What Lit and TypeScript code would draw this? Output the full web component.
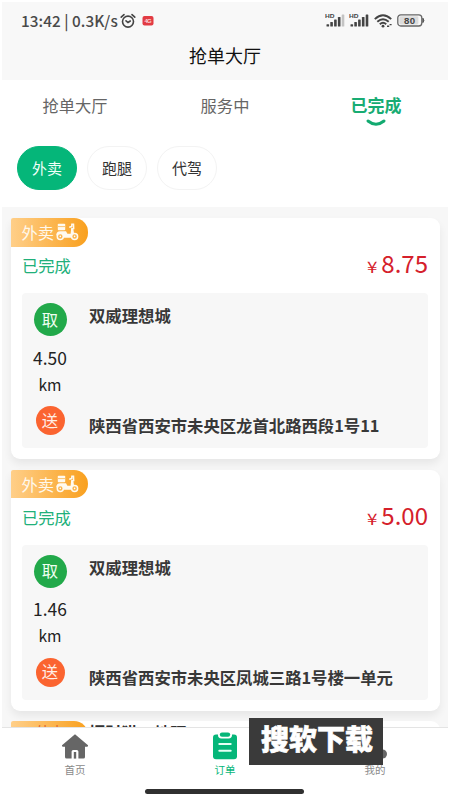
import { LitElement, html, css, svg } from "lit";
import { customElement, property } from "lit/decorators.js";

const FONT = css`"Noto Sans CJK SC", "Noto Sans", sans-serif`;

@customElement("status-bar")
class StatusBar extends LitElement {
  static styles = css`
    :host { display: flex; align-items: center; height: 37px; padding: 0 23px 0 19px; color: #4a4a4a; }
    .time { font: 500 15.3px/20px ${FONT}; letter-spacing: 0.05px; white-space: pre; margin-top: -2px; }
    .alarm { margin-left: 2px; }
    .mark { margin-left: 6px; }
    .spacer { flex: 1; }
    svg { display: block; flex: none; }
    .sig { margin-right: 4px; }
    .wifi { margin: 0 5px 0 1px; }
    text { font-family: "Liberation Sans", sans-serif; }
  `;
  signal(weak: boolean) {
    return html`<svg class="sig" width="20" height="15" viewBox="0 0 20 15">
      <text x="0" y="5" font-size="6" font-weight="700" fill="#444" textLength="9.5" lengthAdjust="spacingAndGlyphs">HD</text>
      ${[0, 1, 2, 3, 4].map((i) => svg`<rect x=${1.5 + i * 3.8} y=${[11.2, 9, 6.5, 4, 1.5][i]} width="2.6"
        height=${[2.3, 4.5, 7, 9.5, 12][i]} rx=".6" fill=${weak && i === 4 ? "#c4c4c4" : "#444"} />`)}
    </svg>`;
  }
  render() {
    return html`
      <span class="time">13:42 | 0.3K/s</span>
      <svg class="alarm" width="16" height="16" viewBox="0 0 16 16" fill="none" stroke="#444" stroke-width="1.6" stroke-linecap="round">
        <circle cx="8" cy="8.6" r="5.5" /><path d="M1.2 4.2 4 1.6M14.8 4.2 12 1.6M6 7.8l2 1.7 2.3-1.5" />
      </svg>
      <svg class="mark" width="12" height="10" viewBox="0 0 12 10">
        <rect x=".5" width="11" height="9.5" rx="2" fill="#e23b43" />
        <text x="2.4" y="7" font-size="6" font-weight="700" fill="#fbd5d5" textLength="7.2">4G</text>
      </svg>
      <span class="spacer"></span>
      ${this.signal(true)}${this.signal(false)}
      <svg class="wifi" width="18" height="14" viewBox="0 0 18 14" fill="none" stroke="#444" stroke-width="1.9">
        <path d="M.8 5.1Q9-2.5 17.2 5.1M3.3 7.8Q9 2.6 14.7 7.8M5.8 10.3Q9 7.4 12.2 10.3" />
        <circle cx="9" cy="12.2" r="1.4" fill="#444" stroke="none" />
        <path d="M13 12.2h2.2m.4-1.6h2" stroke-width="1.4" />
      </svg>
      <svg width="28" height="13" viewBox="0 0 28 13">
        <rect x=".8" y=".8" width="24" height="11.2" rx="3" fill="none" stroke="#666" stroke-width="1.3" />
        <rect x="2.4" y="2.3" width="19" height="8.2" rx="1.4" fill="#dcdcdc" />
        <path d="M25.9 4.2q2 2.2 0 4.4z" fill="#555" stroke="#555" />
        <text x="7" y="9.8" font-size="9.6" fill="#444" textLength="11.2" font-weight="700">80</text>
      </svg>`;
  }
}

@customElement("order-card")
class OrderCard extends LitElement {
  @property() price = "";
  @property() distance = "";
  @property() from = "";
  @property() to = "";
  static styles = css`
    :host { display: block; box-sizing: border-box; height: 241px; flex: none; background: #fff;
      border-radius: 2px 9px 9px 9px; box-shadow: 0 5px 9px rgba(0, 0, 0, 0.065); font-family: ${FONT}; }
    .tag { display: flex; align-items: center; width: 77px; height: 28.5px; box-sizing: border-box; padding-left: 10.5px;
      border-radius: 2px 14px 14px 0; background: linear-gradient(90deg, #ffcf89, #f9a01e);
      color: #fff8ec; font-size: 16.3px; line-height: 28px; }
    .tag svg { margin: 0 0 0 1px; }
    .summary { display: flex; justify-content: space-between; align-items: center; height: 46.5px;
      box-sizing: border-box; padding: 0 12px 9.5px 11px; }
    .state { color: #21b07a; font-size: 16.3px; line-height: 24px; }
    .price { color: #d5202b; font-size: 24px; line-height: 36px; white-space: nowrap; display: flex; align-items: baseline; }
    .yen { font-size: 15px; margin-right: 4px; transform: scaleX(1.25); transform-origin: right; }
    .route { display: grid; grid-template-columns: 56px 1fr; margin: 0 12px 0 11px; height: 155px;
      background: #f7f7f7; border-radius: 4px; box-sizing: border-box; }
    .stops { display: flex; flex-direction: column; align-items: center; padding-top: 10px; }
    .dot { display: flex; align-items: center; justify-content: center; border-radius: 50%; color: #f0fff2;
      width: 33px; height: 33px; font-size: 16.3px; line-height: 1; background: #22a94a; padding-bottom: 1px; box-sizing: border-box; }
    .dot.to { width: 29px; height: 29px; background: #fb6430; color: #fff0e8; margin-top: 9.5px; }
    .num { color: #222; font-size: 17.4px; line-height: 26px; margin-top: 8.5px; }
    .unit { color: #222; font-size: 15.6px; line-height: 26px; }
    .places { display: flex; flex-direction: column; padding: 10px 0 11px 11px; justify-content: space-between;
      color: #383838; font-size: 16.35px; line-height: 24px; font-weight: 700; white-space: nowrap; }
  `;
  render() {
    return html`
      <div class="tag">外卖
        <svg width="24" height="18" viewBox="0 0 24 18" fill="none" stroke="#fffaf0" stroke-width="1.5">
          <rect x="2.8" y=".8" width="7.4" height="6.4" rx=".8" fill="#fffaf0" stroke="none" />
          <path d="M3 3.6h7" stroke="#fbb54d" stroke-width=".8" />
          <path d="M1.2 12.2Q1.5 8.4 5 8.2h6l1.4 2.6h3.2L16.2 5h2l.8 5.2q3.2.4 4 3l-3-.4-2.4 2H9z" fill="#fffaf0" stroke="none" />
          <path d="M14.2 4.2l2.5-.6.2-2.4h1.6l.2 5" />
          <circle cx="5.3" cy="13.4" r="3" fill="#fbb54d" /><circle cx="19.6" cy="13.4" r="3" fill="#fbb54d" />
          <circle cx="5.3" cy="13.4" r=".8" fill="#fff" stroke="none" /><circle cx="19.6" cy="13.4" r=".8" fill="#fff" stroke="none" />
        </svg>
      </div>
      <div class="summary"><span class="state">已完成</span><span class="price"><span class="yen">¥</span>${this.price}</span></div>
      <div class="route">
        <div class="stops">
          <span class="dot">取</span><span class="num">${this.distance}</span><span class="unit">km</span><span class="dot to">送</span>
        </div>
        <div class="places"><span>${this.from}</span><span>${this.to}</span></div>
      </div>`;
  }
}

@customElement("app-root")
class AppRoot extends LitElement {
  static styles = css`
    :host { display: block; position: relative; width: 450px; height: 800px; box-sizing: border-box; padding: 2px 2px 0;
      overflow: hidden; background: #fff; font-family: ${FONT}; }
    .page { display: flex; flex-direction: column; height: 798px; }
    header { height: 78px; flex: none; background: #f8f8f8; }
    h1 { margin: 0; text-align: center; font-size: 18px; line-height: 33px; font-weight: 400; color: #111; }
    .tabs { display: grid; grid-template-columns: 146px 154px 146px; height: 66px; flex: none; text-align: center;
      font-size: 16.3px; line-height: 24px; color: #666; padding-top: 12.5px; box-sizing: border-box; }
    .tab { display: flex; flex-direction: column; align-items: center; }
    .tab.on { color: #18ac73; font-weight: 700; font-size: 17px; padding-left: 2px; }
    .tab svg { margin-top: 2px; }
    .pills { display: flex; gap: 10px; height: 61px; flex: none; padding-left: 15px; }
    .pill { display: flex; align-items: center; justify-content: center; width: 60px; height: 44px; border-radius: 22px;
      box-sizing: border-box; border: 1.5px solid #f3f3f3; font-size: 15px; line-height: 22px; color: #333; }
    .pill.on { background: #05b679; border-color: #05b679; color: #f0fff8; }
    .list { display: flex; flex-direction: column; gap: 10.5px; height: 520px; flex: none; box-sizing: border-box;
      padding: 11px 8px 0 9px; overflow: hidden; background: #f7f7f7; }
    .peek { position: relative; flex: none; height: 60px; }
    .card { height: 60px; background: #fff; border-radius: 2px 9px 0 0; }
    .ribbon { width: 77px; height: 28px; border-radius: 2px 14px 14px 0; background: linear-gradient(90deg, #ffcf89, #f9a01e); }
    .under { position: absolute; top: 1px; left: 25px; display: flex; gap: 25px; font-size: 14px; line-height: 18px; color: #e0642c; }
    .under .place { font-size: 16.3px; line-height: 21px; font-weight: 700; color: #333; }
    nav { display: grid; grid-template-columns: 146px 154px 146px; flex: none; height: 62px; box-sizing: border-box;
      border-top: 1.5px solid #e4e4e4; background: #fff; font-size: 10.5px; line-height: 16px; color: #8a8a8a; }
    .item { display: flex; flex-direction: column; align-items: center; padding-top: 4px; }
    .item.on { color: #05b679; }
    .item svg { margin-bottom: 2px; }
    .home-bar { width: 159px; height: 4.5px; border-radius: 3px; background: #303030; margin: 0 auto; transform: translateX(-1px); }
    .stamp { position: absolute; left: 249px; top: 718px; width: 134px; height: 46.5px; box-sizing: border-box; padding: 0 0 7px 2px;
      display: flex; align-items: center; justify-content: center; background: #3a3a3a; color: #fff;
      font-size: 28px; line-height: 40px; font-weight: 900; -webkit-text-stroke: 0.6px #fff; }
  `;
  render() {
    return html`
      <div class="page">
        <header><status-bar></status-bar><h1>抢单大厅</h1></header>
        <div class="tabs">
          <div class="tab">抢单大厅</div>
          <div class="tab">服务中</div>
          <div class="tab on">已完成
            <svg width="20" height="8" viewBox="0 0 20 8"><path d="M2 2q8 6.4 16 0" fill="none" stroke="#12aa70" stroke-width="2.9" stroke-linecap="round" /></svg>
          </div>
        </div>
        <div class="pills"><span class="pill on">外卖</span><span class="pill">跑腿</span><span class="pill">代驾</span></div>
        <div class="list">
          <order-card price="8.75" distance="4.50" from="双威理想城" to="陕西省西安市未央区龙首北路西段1号11"></order-card>
          <order-card price="5.00" distance="1.46" from="双威理想城" to="陕西省西安市未央区凤城三路1号楼一单元"></order-card>
          <div class="peek"><div class="card"><div class="ribbon"></div></div>
            <div class="under"><span>外卖</span><span class="place">招财猫一地理</span></div></div>
        </div>
        <nav>
          <div class="item">
            <svg width="28" height="28" viewBox="0 0 28 28" fill="#666">
              <path d="M14 2.2 1 13.2q-.5 1.3 1 1.5h2V25q0 1.6 1.6 1.6h5V19.6q0-1.6 1.6-1.6h3.6q1.6 0 1.6 1.6v7h5Q24 26.6 24 25V14.7h2q1.5-.2 1-1.5z" />
              <path d="M12.8 20h2.4v6.6h-2.4z" />
            </svg>首页
          </div>
          <div class="item on">
            <svg width="26" height="28" viewBox="0 0 26 28">
              <rect x="1" y="2.5" width="24" height="24.8" rx="3" fill="#05b679" />
              <rect x="6" y="-1" width="14" height="7.4" rx="3.4" fill="#fff" />
              <rect x="7.8" y=".4" width="10.4" height="4.4" rx="2.2" fill="#05b679" />
              <path d="M7.3 12h11.4M7.3 18.8h11.4" stroke="#e6fff5" stroke-width="2" stroke-linecap="round" />
            </svg>订单
          </div>
          <div class="item">
            <svg width="26" height="28" viewBox="0 0 26 28" fill="#666"><circle cx="13" cy="8" r="6" /><rect x="1" y="17.5" width="24" height="9" rx="4.5" /></svg>我的
          </div>
        </nav>
        <div class="home-bar"></div>
      </div>
      <div class="stamp">搜软下载</div>`;
  }
}
